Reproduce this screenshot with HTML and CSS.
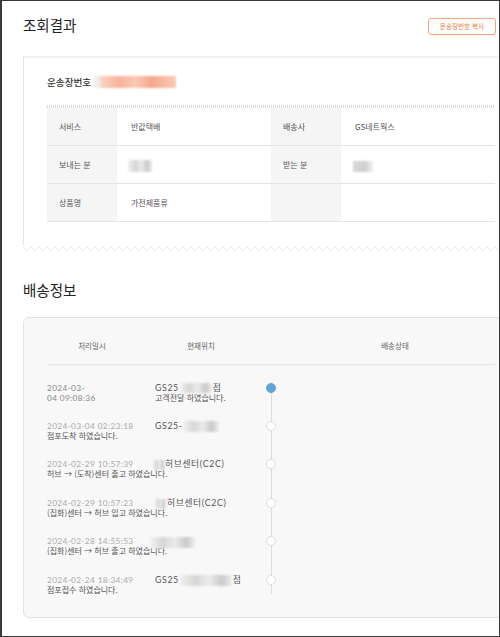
FILE: index.html
```html
<!DOCTYPE html>
<html lang="ko">
<head>
<meta charset="utf-8">
<title>조회결과</title>
<link rel="stylesheet" href="styles.css">
</head>
<body>
<div class="frame">
  <div class="head">
    <h2 class="title">조회결과</h2>
    <button class="copy-btn" type="button">운송장번호 복사</button>
  </div>

  <div class="card receipt">
    <div class="waybill">
      <span class="waybill-label">운송장번호</span>
      <span class="mosaic mosaic-orange"></span>
    </div>
    <div class="dotline"></div>
    <div class="info-grid">
      <div class="cell label">서비스</div>
      <div class="cell value">반값택배</div>
      <div class="cell label">배송사</div>
      <div class="cell value">GS네트웍스</div>

      <div class="cell label">보내는 분</div>
      <div class="cell value"><span class="mosaic mosaic-sender"></span></div>
      <div class="cell label">받는 분</div>
      <div class="cell value"><span class="mosaic mosaic-receiver"></span></div>

      <div class="cell label">상품명</div>
      <div class="cell value">가전제품류</div>
      <div class="cell label"></div>
      <div class="cell value"></div>
    </div>
  </div>
  <div class="zigzag">
    <svg width="480" height="9" viewBox="0 0 480 9" xmlns="http://www.w3.org/2000/svg">
      <defs>
        <pattern id="zz" width="8" height="9" patternUnits="userSpaceOnUse">
          <path d="M0 0 H8 V2 L4 6 L0 2 Z" fill="#ffffff"/>
          <path d="M0 2 L4 6 L8 2" fill="none" stroke="#e6e6e6" stroke-width="1"/>
        </pattern>
      </defs>
      <rect x="0" y="0" width="480" height="9" fill="url(#zz)"/>
    </svg>
  </div>

  <h2 class="title section-title">배송정보</h2>

  <div class="card track">
    <div class="track-head">
      <span>처리일시</span>
      <span>현재위치</span>
      <span>배송상태</span>
    </div>
    <div class="timeline">
      <div class="entry">
        <div class="date date-current">2024-03-<br>04 09:08:36</div>
        <div class="loc">GS25<span class="mosaic m-a"></span>점<br><span class="desc">고객전달 하였습니다.</span></div>
        <div class="dot-col"><span class="dot dot-active"></span></div>
      </div>
      <div class="entry">
        <div class="date">2024-03-04 02:23:18</div>
        <div class="loc">GS25-<span class="mosaic m-b"></span></div>
        <div class="dot-col"><span class="dot"></span></div>
        <div class="desc wide">점포도착 하였습니다.</div>
      </div>
      <div class="entry">
        <div class="date">2024-02-29 10:57:39</div>
        <div class="loc shift"><span class="mosaic m-c"></span>허브센터(C2C)</div>
        <div class="dot-col"><span class="dot"></span></div>
        <div class="desc wide">허브 → (도착)센터 출고 하였습니다.</div>
      </div>
      <div class="entry">
        <div class="date">2024-02-29 10:57:23</div>
        <div class="loc"><span class="mosaic m-d"></span>허브센터(C2C)</div>
        <div class="dot-col"><span class="dot"></span></div>
        <div class="desc wide">(집화)센터 → 허브 입고 하였습니다.</div>
      </div>
      <div class="entry">
        <div class="date">2024-02-28 14:55:53</div>
        <div class="loc shift2"><span class="mosaic m-e"></span></div>
        <div class="dot-col"><span class="dot"></span></div>
        <div class="desc wide">(집화)센터 → 허브 출고 하였습니다.</div>
      </div>
      <div class="entry">
        <div class="date">2024-02-24 18:34:49</div>
        <div class="loc">GS25<span class="mosaic m-f"></span>점</div>
        <div class="dot-col"><span class="dot"></span></div>
        <div class="desc wide">점포접수 하였습니다.</div>
      </div>
    </div>
  </div>
</div>
</body>
</html>
```
FILE: styles.css
```css
html, body {
  margin: 0;
  padding: 0;
  background: #ffffff;
}

body {
  font-family: "Lato", "Noto Sans CJK KR", sans-serif;
  color: #444;
}

.frame {
  width: 500px;
  height: 637px;
  box-sizing: border-box;
  border: 1px solid #3a3a3a;
  border-left-width: 2px;
  padding-left: 21px;
  overflow: hidden;
  background: #ffffff;
}

.head {
  height: 49px;
  display: flex;
  align-items: center;
  justify-content: space-between;
  margin-right: 3px;
  margin-bottom: 6px;
}

.title {
  margin: 0;
  font-family: "Noto Sans CJK KR", sans-serif;
  font-size: 14.5px;
  font-weight: 400;
  color: #222;
  line-height: 1;
}

.copy-btn {
  width: 68px;
  height: 17px;
  padding: 0;
  border: 1px solid #f6a47a;
  border-radius: 3px;
  background: #ffffff;
  color: #f07a44;
  font-family: "Noto Sans CJK KR", sans-serif;
  font-size: 6.6px;
  line-height: 1;
  margin-top: 2px;
}

.card {
  width: 480px;
  box-sizing: border-box;
  flex-shrink: 0;
}

.receipt {
  border-top: 2px solid #f1f1f1;
  border-left: 1px solid #e4e4e4;
  border-right: 1px solid #e4e4e4;
  padding: 0 0 23px 23px;
  background: #ffffff;
}

.waybill {
  height: 47px;
  display: flex;
  align-items: center;
}

.waybill-label {
  font-family: "Noto Sans CJK KR", sans-serif;
  font-size: 9.6px;
  font-weight: 500;
  color: #333;
}

.mosaic {
  display: inline-block;
  vertical-align: middle;
  height: 11px;
  background: linear-gradient(90deg, #f1f1f1 0%, #d6d6d6 30%, #ececec 55%, #c9c9c9 80%, #eeeeee 100%);
  filter: blur(0.8px);
}

.mosaic-orange {
  width: 82px;
  height: 12px;
  margin-left: 3px;
  background: linear-gradient(90deg, #eeeeee 0, #eeeeee 6px, #fcd6c6 6px, #f8b39c 30%, #fbc9b5 50%, #f5a88e 70%, #fbcbb8 100%);
}

.dotline {
  width: 448px;
  height: 3px;
  background-image:
    linear-gradient(90deg, #d9d9d9 1px, transparent 1px),
    linear-gradient(0deg, #ffffff 1px, transparent 1px);
  background-size: 2px 100%, 100% 2px;
}

.info-grid {
  display: grid;
  grid-template-columns: 70px 154px 70px 154px;
  grid-auto-rows: 38px;
  width: 448px;
}

.cell {
  display: flex;
  align-items: center;
  border-bottom: 1px solid #e4e4e4;
  font-family: "Noto Sans CJK KR", "Lato", sans-serif;
  font-size: 8px;
  color: #555;
}

.info-grid .cell:nth-child(n+9) {
  height: 37px;
}

.label {
  background: #f5f5f5;
  padding-left: 12px;
}

.value {
  padding-left: 14px;
}

.mosaic-sender {
  width: 24px;
  height: 12px;
  margin-left: -3px;
  margin-top: 2px;
}

.mosaic-receiver {
  width: 20px;
  height: 11px;
  margin-left: -2px;
  margin-top: 3px;
  background: linear-gradient(90deg, #d8d8d8 0%, #cfcfcf 60%, #f0f0f0 100%);
}

.zigzag {
  height: 9px;
  line-height: 0;
  margin-top: 0;
}

.zigzag svg {
  display: block;
}

.section-title {
  height: 53px;
  padding-top: 10px;
  display: flex;
  align-items: center;
}

.track {
  height: 301px;
  border: 1px solid #e2e2e2;
  border-radius: 6px;
  background: #f8f8f8;
  padding: 0 0 0 23px;
}

.track-head {
  display: grid;
  grid-template-columns: 90px 128px 260px;
  width: 448px;
  height: 38px;
  padding-top: 8px;
  align-items: center;
  border-bottom: 1px solid #e3e3e3;
  font-family: "Noto Sans CJK KR", sans-serif;
  font-size: 7.5px;
  color: #666;
}

.track-head span {
  text-align: center;
}

.timeline {
  position: relative;
  display: flex;
  flex-direction: column;
  gap: 18.4px;
  padding-top: 17.7px;
}

.timeline::before {
  content: "";
  position: absolute;
  left: 223.5px;
  top: 22.7px;
  height: 206px;
  width: 1px;
  background: #dcdcdc;
}

.entry {
  display: grid;
  grid-template-columns: 108px 110px 12px;
  grid-template-rows: 10px 10px;
  font-size: 8.3px;
  line-height: 10px;
  white-space: nowrap;
}

.date {
  color: #aaa;
  letter-spacing: 0.35px;
}

.date-current {
  color: #888;
  grid-row: 1 / 3;
}

.loc {
  color: #555;
  font-size: 8.8px;
  letter-spacing: 0.6px;
}

.entry:first-child .loc {
  grid-row: 1 / 3;
}

.loc.shift {
  margin-left: -2px;
}

.loc.shift2 {
  margin-left: -5px;
}

.desc {
  color: #555;
  font-size: 8px;
  letter-spacing: 0;
  font-family: "Noto Sans CJK KR", "Lato", sans-serif;
}

.desc.wide {
  grid-column: 1 / 3;
  grid-row: 2;
}

.dot-col {
  grid-row: 1;
  grid-column: 3;
  display: flex;
  justify-content: center;
  align-items: center;
}

.dot {
  position: relative;
  z-index: 1;
  width: 10px;
  height: 10px;
  box-sizing: border-box;
  border-radius: 50%;
  background: #ffffff;
  border: 1px solid #dedede;
}

.dot-active {
  background: #5fa4d3;
  border-color: #5fa4d3;
}

.m-a { width: 32px; height: 10px; margin: 0 1px 0 1px; }
.m-b { width: 36px; height: 11px; }
.m-c { width: 12px; height: 10px; }
.m-d { width: 11px; height: 10px; margin-right: 1px; }
.m-e { width: 45px; height: 11px; }
.m-f { width: 52px; height: 11px; margin: 0 1px; }
```
